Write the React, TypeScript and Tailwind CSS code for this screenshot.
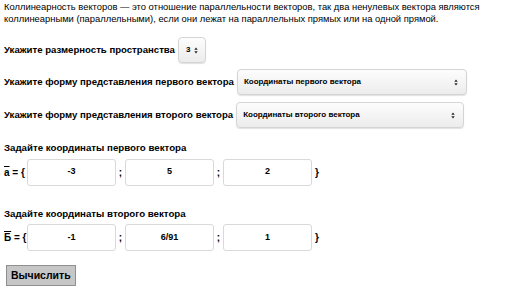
import React from "react";

const font = { fontFamily: '"Liberation Sans", Arial, sans-serif' };

function Arrows() {
  return (
    <svg width="4" height="7" viewBox="0 0 4 7" className="shrink-0">
      <path d="M2 0.5 L3.7 2.8 L0.3 2.8 Z" fill="#222" />
      <path d="M2 6.5 L3.7 4.2 L0.3 4.2 Z" fill="#222" />
    </svg>
  );
}

function FakeSelect({ value, className }: { value: string; className: string }) {
  return (
    <div
      className={`flex h-[26px] shrink-0 items-center justify-between rounded-[4px] border border-[#d4d4d4] bg-gradient-to-b from-[#fdfdfd] to-[#ececec] text-[8px] font-bold text-black shadow-[0_1px_1px_rgba(0,0,0,0.12)] ${className}`}
    >
      <span>{value}</span>
      <Arrows />
    </div>
  );
}

function CoordInput({ value }: { value: string }) {
  return (
    <div className="flex h-[27px] w-[89px] shrink-0 items-center justify-center rounded-[3px] border border-[#d9d9d9] bg-white text-[9px] font-bold text-black">
      {value}
    </div>
  );
}

function VectorRow({ label, values }: { label: React.ReactNode; values: string[] }) {
  return (
    <div className="flex items-center whitespace-nowrap text-[10px] font-bold text-black">
      <span className="w-[27px] shrink-0 pl-[4px]">{label}</span>
      <CoordInput value={values[0]} />
      <span className="w-[9px] text-center">;</span>
      <CoordInput value={values[1]} />
      <span className="w-[9px] text-center">;</span>
      <CoordInput value={values[2]} />
      <span className="pl-[3px]">{"}"}</span>
    </div>
  );
}

export default function App() {
  return (
    <div className="h-[290px] w-[516px] overflow-hidden bg-white text-black" style={font}>
      <p className="m-0 px-[4px] pt-[1px] text-[9.4px] leading-[12px]">
        Коллинеарность векторов — это отношение параллельности векторов, так два ненулевых вектора являются
        коллинеарными (параллельными), если они лежат на параллельных прямых или на одной прямой.
      </p>

      <div className="mt-[12px] flex items-center whitespace-nowrap pl-[4px] text-[9.6px] font-bold">
        <span>Укажите размерность пространства</span>
        <FakeSelect value="3" className="ml-[3px] w-[28px] px-[7px]" />
      </div>

      <div className="mt-[6px] flex items-center whitespace-nowrap pl-[4px] text-[9.6px] font-bold">
        <span>Укажите форму представления первого вектора</span>
        <FakeSelect value="Координаты первого вектора" className="ml-[3px] w-[230px] pl-[6px] pr-[8px]" />
      </div>

      <div className="mt-[7px] flex items-center whitespace-nowrap pl-[4px] text-[9.6px] font-bold">
        <span>Укажите форму представления второго вектора</span>
        <FakeSelect value="Координаты второго вектора" className="ml-[3px] w-[228px] pl-[6px] pr-[8px]" />
      </div>

      <div className="mt-[13px] pl-[4px] text-[9.7px] font-bold">Задайте координаты первого вектора</div>
      <div className="mt-[3px]">
        <VectorRow
          label={
            <>
              <span className="overline">a</span> = {"{"}
            </>
          }
          values={["-3", "5", "2"]}
        />
      </div>

      <div className="mt-[21px] pl-[4px] text-[9.7px] font-bold">Задайте координаты второго вектора</div>
      <div className="mt-[3px]">
        <VectorRow
          label={
            <>
              <span className="overline">Б</span> = {"{"}
            </>
          }
          values={["-1", "6/91", "1"]}
        />
      </div>

      <button className="ml-[6px] mt-[14px] h-[21px] border border-[#8f8f8f] bg-[#c6c6c6] px-[4px] text-[10.5px] font-bold text-black">
        Вычислить
      </button>
    </div>
  );
}
